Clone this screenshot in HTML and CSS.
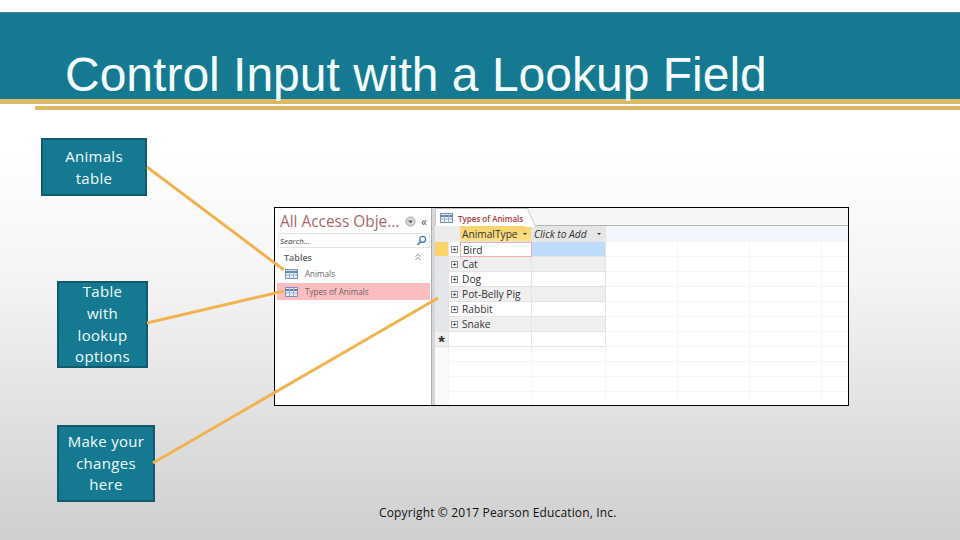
FILE: index.html
```html
<!DOCTYPE html>
<html lang="en">
<head>
    <meta charset="UTF-8">
    <title>Control Input with a Lookup Field</title>
    <link rel="stylesheet" href="styles.css">
</head>
<body>
    <div class="slide">
        <div class="header">
            <h1>Control Input with a Lookup Field</h1>
        </div>
        <div class="rule-one"></div>
        <div class="rule-two"></div>

        <div class="callout callout-animals">Animals<br>table</div>
        <div class="callout callout-lookup">Table<br>with<br>lookup<br>options</div>
        <div class="callout callout-changes">Make your<br>changes<br>here</div>

        <div class="access">
            <div class="nav">
                <div class="nav-title">
                    <span class="nav-name">All Access Obje...</span>
                    <svg class="nav-drop" viewBox="0 0 12 12"><circle cx="6" cy="6" r="5" fill="#d8d8d8" stroke="#a0a0a0"/><path d="M3.5 5h5L6 8z" fill="#555"/></svg>
                    <span class="nav-close">«</span>
                </div>
                <div class="nav-search">
                    <span>Search...</span>
                    <svg class="search-icon" viewBox="0 0 14 14"><circle cx="8.5" cy="5.5" r="3.8" fill="none" stroke="#3f78b5" stroke-width="1.6"/><path d="M6 8.5L2 12.5" stroke="#3f78b5" stroke-width="2"/></svg>
                </div>
                <div class="nav-group">
                    <span>Tables</span>
                    <svg class="group-icon" viewBox="0 0 10 10"><path d="M2 4.5l3-3 3 3M2 8.5l3-3 3 3" fill="none" stroke="#666"/></svg>
                </div>
                <div class="nav-item">
                    <svg class="table-icon" viewBox="0 0 13 10"><rect x=".5" y=".5" width="12" height="9" fill="#e6edf7" stroke="#7b93b8"/><path d="M.5 3h12" stroke="#5f7fb0" stroke-width="2"/><path d="M4.5 1v8M8.5 1v8M1 6h11" stroke="#9fb2cf"/></svg>
                    <span>Animals</span>
                </div>
                <div class="nav-item nav-item-on">
                    <svg class="table-icon" viewBox="0 0 13 10"><rect x=".5" y=".5" width="12" height="9" fill="#e6edf7" stroke="#7b93b8"/><path d="M.5 3h12" stroke="#5f7fb0" stroke-width="2"/><path d="M4.5 1v8M8.5 1v8M1 6h11" stroke="#9fb2cf"/></svg>
                    <span>Types of Animals</span>
                </div>
            </div>
            <div class="splitter"></div>
            <div class="sheet">
                <div class="tabs">
                    <div class="tab">
                        <svg class="table-icon" viewBox="0 0 13 10"><rect x=".5" y=".5" width="12" height="9" fill="#e6edf7" stroke="#7b93b8"/><path d="M.5 3h12" stroke="#5f7fb0" stroke-width="2"/><path d="M4.5 1v8M8.5 1v8M1 6h11" stroke="#9fb2cf"/></svg>
                        <span>Types of Animals</span>
                    </div>
                </div>
                <div class="row row-head">
                    <div class="cell sel"></div>
                    <div class="cell plus"></div>
                    <div class="cell field">AnimalType <i class="caret"></i></div>
                    <div class="cell add">Click to Add <i class="caret"></i></div>
                    <div class="cell blank"></div><div class="cell blank"></div><div class="cell blank"></div><div class="cell blank"></div>
                </div>
                <div class="row row-current">
                    <div class="cell sel sel-on"></div>
                    <div class="cell plus"><b>+</b></div>
                    <div class="cell name name-on">Bird</div>
                    <div class="cell add add-on"></div>
                    <div class="cell blank"></div><div class="cell blank"></div><div class="cell blank"></div><div class="cell blank"></div>
                </div>
                <div class="row row-alt">
                    <div class="cell sel"></div><div class="cell plus"><b>+</b></div><div class="cell name">Cat</div><div class="cell add"></div>
                    <div class="cell blank"></div><div class="cell blank"></div><div class="cell blank"></div><div class="cell blank"></div>
                </div>
                <div class="row">
                    <div class="cell sel"></div><div class="cell plus"><b>+</b></div><div class="cell name">Dog</div><div class="cell add"></div>
                    <div class="cell blank"></div><div class="cell blank"></div><div class="cell blank"></div><div class="cell blank"></div>
                </div>
                <div class="row row-alt">
                    <div class="cell sel"></div><div class="cell plus"><b>+</b></div><div class="cell name">Pot-Belly Pig</div><div class="cell add"></div>
                    <div class="cell blank"></div><div class="cell blank"></div><div class="cell blank"></div><div class="cell blank"></div>
                </div>
                <div class="row">
                    <div class="cell sel"></div><div class="cell plus"><b>+</b></div><div class="cell name">Rabbit</div><div class="cell add"></div>
                    <div class="cell blank"></div><div class="cell blank"></div><div class="cell blank"></div><div class="cell blank"></div>
                </div>
                <div class="row row-alt">
                    <div class="cell sel"></div><div class="cell plus"><b>+</b></div><div class="cell name">Snake</div><div class="cell add"></div>
                    <div class="cell blank"></div><div class="cell blank"></div><div class="cell blank"></div><div class="cell blank"></div>
                </div>
                <div class="row">
                    <div class="cell sel star">*</div><div class="cell plus"></div><div class="cell name"></div><div class="cell add"></div>
                    <div class="cell blank"></div><div class="cell blank"></div><div class="cell blank"></div><div class="cell blank"></div>
                </div>
                <div class="row row-empty">
                    <div class="cell sel"></div><div class="cell plus"></div><div class="cell name"></div><div class="cell add"></div>
                    <div class="cell blank"></div><div class="cell blank"></div><div class="cell blank"></div><div class="cell blank"></div>
                </div>
                <div class="row row-empty">
                    <div class="cell sel"></div><div class="cell plus"></div><div class="cell name"></div><div class="cell add"></div>
                    <div class="cell blank"></div><div class="cell blank"></div><div class="cell blank"></div><div class="cell blank"></div>
                </div>
                <div class="row row-empty">
                    <div class="cell sel"></div><div class="cell plus"></div><div class="cell name"></div><div class="cell add"></div>
                    <div class="cell blank"></div><div class="cell blank"></div><div class="cell blank"></div><div class="cell blank"></div>
                </div>
                <div class="row row-empty">
                    <div class="cell sel"></div><div class="cell plus"></div><div class="cell name"></div><div class="cell add"></div>
                    <div class="cell blank"></div><div class="cell blank"></div><div class="cell blank"></div><div class="cell blank"></div>
                </div>
            </div>
        </div>

        <svg class="arrows" viewBox="0 0 960 540">
            <path d="M147 167L284 270M147 323L284 291M153 463L438 298"/>
        </svg>

        <div class="copyright">Copyright © 2017 Pearson Education, Inc.</div>
    </div>
</body>
</html>
```

FILE: styles.css
```css
* {
    box-sizing: border-box;
}
body {
    margin: 0;
    font-family: "Liberation Sans", Arial, sans-serif;
}
.slide {
    position: relative;
    width: 960px;
    height: 540px;
    overflow: hidden;
    padding-top: 12px;
    background: linear-gradient(#ffffff 150px, #f4f4f4 280px, #cfcfcf 540px);
}
.header {
    height: 87px;
    padding: 35px 0 0 65px;
    background-color: #157a91;
    border-top: 1px solid #4d8296;
}
h1 {
    margin: 0;
    font-size: 48px;
    font-weight: normal;
    line-height: 54px;
    color: #f4fdfd;
    white-space: nowrap;
}
.rule-one {
    height: 5px;
    background-color: #dcb964;
}
.rule-two {
    height: 4px;
    margin: 2px 0 0 35px;
    background-color: #dcb964;
}

/* callouts */
.callout {
    position: absolute;
    display: flex;
    align-items: center;
    justify-content: center;
    text-align: center;
    background-color: #157a91;
    border: 2px solid #0f5a6c;
    color: #f2fbfb;
    font-family: "Open Sans", sans-serif;
    font-size: 15px;
    line-height: 21.7px;
    letter-spacing: 0.3px;
}
.callout-animals {
    left: 41px;
    top: 138px;
    width: 106px;
    height: 58px;
    padding-top: 1px;
}
.callout-lookup {
    left: 57px;
    top: 281px;
    width: 91px;
    height: 87px;
}
.callout-changes {
    left: 57px;
    top: 425px;
    width: 98px;
    height: 77px;
}
.arrows {
    position: absolute;
    left: 0;
    top: 0;
    width: 960px;
    height: 540px;
}
.arrows path {
    fill: none;
    stroke: #f2b252;
    stroke-width: 3;
}
.copyright {
    position: absolute;
    left: 379px;
    top: 504px;
    font-family: "Open Sans", sans-serif;
    font-size: 12px;
    font-weight: 500;
    letter-spacing: 0.15px;
    line-height: 17px;
    color: #111;
    white-space: nowrap;
}

/* access window */
.access {
    position: absolute;
    left: 274px;
    top: 207px;
    width: 575px;
    height: 199px;
    display: flex;
    background-color: #fff;
    border: 1px solid #000;
    font-family: "Open Sans", sans-serif;
}
.nav {
    width: 156px;
    padding-top: 4px;
    color: #555;
}
.nav-title {
    display: flex;
    align-items: center;
    height: 19px;
    padding: 0 4px 0 5px;
}
.nav-name {
    flex: 1;
    font-size: 15.4px;
    color: #a8666b;
    white-space: nowrap;
}
.nav-drop {
    width: 11px;
    height: 11px;
    margin-right: 5px;
}
.nav-close {
    font-size: 12px;
    color: #555;
}
.nav-search {
    display: flex;
    align-items: center;
    justify-content: space-between;
    height: 15px;
    margin: 2px 1px 0 3px;
    padding: 0 2px 0 1px;
    border: 1px solid #e4e4e4;
    font-size: 8px;
    font-style: italic;
    color: #333;
}
.search-icon {
    width: 11px;
    height: 11px;
}
.nav-group {
    display: flex;
    align-items: center;
    justify-content: space-between;
    height: 16px;
    margin-top: 1px;
    padding: 0 9px 0 9px;
    font-size: 9px;
    font-weight: 600;
    color: #666;
}
.group-icon {
    width: 8px;
    height: 8px;
}
.nav-item {
    display: flex;
    align-items: center;
    gap: 7px;
    height: 17px;
    margin: 0 1px 0 2px;
    padding-left: 8px;
    font-size: 8.1px;
    color: #666;
}
.nav-item-on {
    margin-top: 1px;
    background-color: #fdbdc0;
}
.table-icon {
    width: 13px;
    height: 10px;
    flex-shrink: 0;
}
.splitter {
    width: 4px;
    background-color: #d4d8dc;
    border-left: 1px solid #a9adb1;
}

/* datasheet */
.sheet {
    flex: 1;
    overflow: hidden;
}
.tabs {
    height: 18px;
    background-color: #f6f6f6;
    border-bottom: 1px solid #b4b4b4;
}
.tab {
    position: relative;
    display: flex;
    align-items: center;
    gap: 5px;
    width: 92px;
    height: 18px;
    padding: 1px 0 0 4px;
    background-color: #fff;
    border: 1px solid #c9c9c9;
    border-right: none;
    border-bottom: none;
    font-size: 8px;
    font-weight: 600;
    color: #a5373f;
    white-space: nowrap;
}
.tab::after {
    content: "";
    position: absolute;
    top: -1px;
    right: -5px;
    width: 10px;
    height: 18px;
    background-color: #fff;
    border-right: 1px solid #c9c9c9;
    border-top: 1px solid #c9c9c9;
    transform: skewX(24deg);
}
.tab span {
    position: relative;
    z-index: 1;
}
.row {
    display: flex;
    height: 15px;
}
.row-head {
    height: 16px;
}
.row-head .blank {
    background-color: #f3f5fc;
}
.row-alt .name,
.row-alt .add,
.row-alt .plus {
    background-color: #efefef;
}
.cell {
    display: flex;
    align-items: center;
    flex-shrink: 0;
    border-right: 1px solid #e4e4e4;
    border-bottom: 1px solid #e4e4e4;
    font-size: 10.2px;
    color: #333;
    white-space: nowrap;
}
.sel {
    width: 14px;
    justify-content: center;
    background-color: #e4e6e8;
}
.sel-on {
    background-color: #fcd466;
}
.star {
    font-family: "Liberation Sans", sans-serif;
    font-size: 17px;
    font-weight: bold;
    line-height: 17px;
    padding-top: 6px;
    background-color: #f0f0f0;
}
.plus {
    width: 11px;
    justify-content: center;
    border-right: none;
}
.row-head .sel,
.row-head .plus {
    background-color: #ececec;
    border-color: #ececec;
}
.plus b {
    display: flex;
    align-items: center;
    justify-content: center;
    width: 7px;
    height: 7px;
    border: 1px solid #8a8a8a;
    background-color: #fff;
    font-size: 7px;
    font-weight: bold;
    line-height: 5px;
}
.name {
    width: 72px;
    padding-left: 2px;
}
.name-on {
    background-color: #fff;
    border: 1px solid #eeb0b0;
    box-shadow: 0 1px 0 #eeb0b0;
}
.field {
    width: 72px;
    padding: 0 4px 0 2px;
    justify-content: space-between;
    background: linear-gradient(#f6d36b, #fbe08a);
}
.add {
    width: 74px;
}
.row-head .add {
    justify-content: space-between;
    padding: 0 4px 0 2px;
    font-style: italic;
    background-color: #e6e6e6;
}
.add-on {
    background-color: #bddbfa;
}
.blank {
    width: 72px;
    border-right-color: #f6f6f6;
    border-bottom-color: #f6f6f6;
}
.row-empty .cell {
    border-color: #f6f6f6;
}
.row-empty .sel {
    background-color: #fafafa;
}
.caret {
    width: 0;
    height: 0;
    border-left: 2px solid transparent;
    border-right: 2px solid transparent;
    border-top: 2px solid #333;
}
```
